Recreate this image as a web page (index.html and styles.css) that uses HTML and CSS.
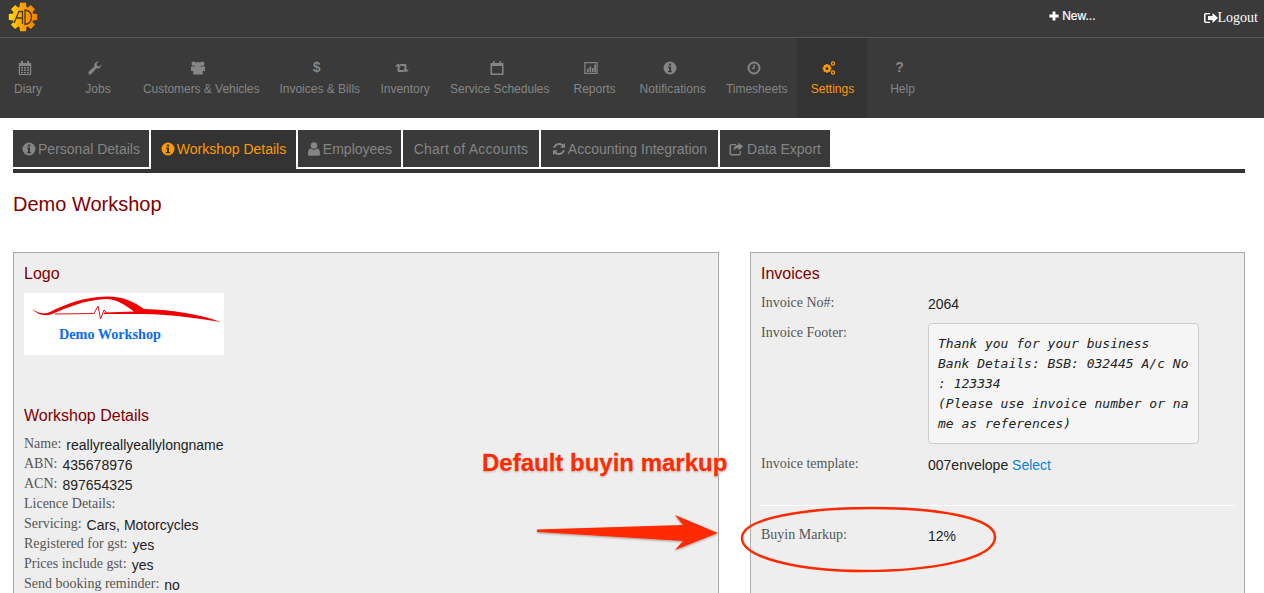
FILE: index.html
```html
<!DOCTYPE html>
<html lang="en">
<head>
<meta charset="utf-8">
<title>Workshop Details</title>
<link rel="stylesheet" href="styles.css">
</head>
<body>
<svg class="sprite" width="0" height="0" aria-hidden="true">
  <symbol id="i-cal" viewBox="0 0 14 14"><path fill-rule="evenodd" d="M3 0h2v2h4V0h2v2h2.200v12H.8V2H3zM2 5v8h10V5zM3 6h2v1.500H3zM6 6h2v1.500H6zM9 6h2v1.500H9zM3 8.500h2V10H3zM6 8.500h2V10H6zM9 8.500h2V10H9zM3 11h2v1.300H3zM6 11h2v1.300H6zM9 11h2v1.300H9z"/></symbol>
  <symbol id="i-wrench" viewBox="0 0 14 14"><path d="M13.500 3.200a4 4 0 0 1-5.200 4.100L3.400 13a1.700 1.700 0 0 1-2.500-2.400l5.500-5A4 4 0 0 1 10.800.5L8.600 2.800l.5 2.300 2.300.5z"/></symbol>
  <symbol id="i-users" viewBox="0 0 14 14"><circle cx="2.800" cy="2.800" r="2.300"/><circle cx="11.200" cy="2.800" r="2.300"/><circle cx="7" cy="4" r="3"/><path d="M0 5.500h14V10h-2.200v3.500H2.200V10H0z"/></symbol>
  <symbol id="i-retweet" viewBox="0 0 14 14"><path d="M0 5.500 3 2.500l3 3H4.600V9H8l1.800 2H3.800a1.200 1.200 0 0 1-1.200-1.200V5.500zM4.200 3h6a1.200 1.200 0 0 1 1.200 1.200V8.500H14L11 11.500 8 8.500h1.400V5H6z"/></symbol>
  <symbol id="i-calo" viewBox="0 0 14 14"><path fill-rule="evenodd" d="M3 0h1.500v2h5V0H11v2h2.500v12H.5V2H3zM2 5v7.500h10V5z"/></symbol>
  <symbol id="i-bar" viewBox="0 0 14 14"><path fill-rule="evenodd" d="M.3 1h13.400v12H.3zM1.500 2.200v9.600h11V2.200zM3 7.500h1.700v3.500H3zM5.500 5.500h1.700V11H5.500zM8 7h1.700v4H8zM10.300 3.500H12V11h-1.700z"/></symbol>
  <symbol id="i-info" viewBox="0 0 14 14"><path fill-rule="evenodd" d="M7 .5a6.500 6.500 0 1 1 0 13 6.500 6.500 0 0 1 0-13zM5.900 2.500v2h2.200v-2zM5 5.500v1.300h1V10H5v1.300h4V10H8V5.500z"/></symbol>
  <symbol id="i-clock" viewBox="0 0 14 14"><path fill-rule="evenodd" d="M7 .5a6.500 6.500 0 1 1 0 13 6.500 6.500 0 0 1 0-13zM7 2.500a4.500 4.500 0 1 0 0 9 4.500 4.500 0 0 0 0-9zM6.400 3.800h1.400V8H4.800V6.800h1.600z"/></symbol>
  <symbol id="i-cogs" viewBox="0 0 14 14"><path fill-rule="evenodd" d="M4 3h2l.3 1.200 1.100-.5 1.300 1.400-.6 1 1.200.4v2l-1.200.3.6 1.100-1.400 1.300-1-.6L6 11.800H4l-.3-1.200-1.100.6L1.300 9.800l.6-1L.6 8.400v-2l1.300-.3-.6-1.100 1.300-1.300 1.100.6zM5 5.900a1.500 1.500 0 1 0 0 3 1.500 1.500 0 0 0 0-3z"/><path fill-rule="evenodd" d="M11 .3a2.200 2.200 0 1 1 0 4.400 2.200 2.200 0 0 1 0-4.400zM11 1.600a.9.900 0 1 0 0 1.800.9.900 0 0 0 0-1.800zM11 9.300a2.200 2.200 0 1 1 0 4.400 2.200 2.200 0 0 1 0-4.400zM11 10.600a.9.900 0 1 0 0 1.800.9.900 0 0 0 0-1.800z"/></symbol>
  <symbol id="i-user" viewBox="0 0 14 14"><circle cx="7" cy="3.500" r="3.300"/><path d="M3.500 6.500 7 8l3.500-1.500c1.700.5 2.500 2.300 2.500 5.500 0 1-.6 1.800-1.700 1.800H2.700C1.600 13.800 1 13 1 12c0-3.200.8-5 2.500-5.500z"/></symbol>
  <symbol id="i-refresh" viewBox="0 0 14 14"><path d="M13 1v4.800H8.200L10 4a4.300 4.300 0 0 0-6.800 1.700H1.100A6.300 6.300 0 0 1 11.400 2.600zM1 13V8.200h4.800L4 10a4.300 4.300 0 0 0 6.800-1.700h2.100a6.300 6.300 0 0 1-10.300 3.100z"/></symbol>
  <symbol id="i-share" viewBox="0 0 14 14"><path d="M2.500 2H7v1.300H2.800a.8.800 0 0 0-.8.800v7.100c0 .4.400.8.800.8h7.100c.4 0 .8-.4.800-.8V9H12v2.500A2 2 0 0 1 10 13.500H2.500A2 2 0 0 1 .5 11.500V4a2 2 0 0 1 2-2z"/><path d="M9.500.5 14 4.500 9.500 8.500V6C7 6 5.500 6.800 4.500 9c0-4 2-6 5-6.200z"/></symbol>
  <symbol id="i-plus" viewBox="0 0 12 12"><path d="M4.300.5h3.400v3.800h3.800v3.400H7.700v3.800H4.300V7.700H.5V4.300h3.800z"/></symbol>
  <symbol id="i-out" viewBox="0 0 14 12"><path d="M1.800 1H6v1.300H2.300a.8.800 0 0 0-.8.800v5.800c0 .4.400.8.800.8H6V11H1.800A1.800 1.800 0 0 1 0 9.200V2.800A1.800 1.800 0 0 1 1.800 1z"/><path d="M8.500 1 14 6l-5.500 5V8H4V4h4.500z"/></symbol>
</svg>

<header class="topbar">
  <svg class="brand" viewBox="0 0 30 30" width="30" height="30" role="img" aria-label="Logo">
    <defs><linearGradient id="gearfill" gradientUnits="userSpaceOnUse" x1="1" x2="29" y1="15" y2="15"><stop offset="0" stop-color="#ffd800"/><stop offset="0.5" stop-color="#ff9f00"/><stop offset="1" stop-color="#f57f00"/></linearGradient></defs>
    <g fill="url(#gearfill)">
      <circle cx="15" cy="15" r="10.500"/>
      <path d="M12 .8h6l.6 5h-7.200zM12 29.200h6l.6-5h-7.200zM.8 12v6l5 .6v-7.200zM29.200 12v6l-5 .6v-7.200zM3 7.200 7.200 3l3.900 3.200-4.900 4.900zM27 7.200 22.800 3l-3.900 3.200 4.900 4.900zM3 22.800 7.200 27l3.900-3.200-4.900-4.900zM27 22.800 22.800 27l-3.900-3.200 4.900-4.900z"/>
    </g>
    <path fill="none" stroke="#4a3a10" stroke-width="1.300" d="M6 21 11 9.500h3.500V22M8 16h6"/>
    <path fill="none" stroke="#4a3a10" stroke-width="1.300" d="M17 8c4 .5 6.500 3.500 6.500 7.300S21 22 17 22.500z"/>
  </svg>
  <a class="new-link"><svg class="ic-plus"><use href="#i-plus"/></svg>New...</a>
  <a class="logout"><svg class="ic-out"><use href="#i-out"/></svg>Logout</a>
</header>

<nav class="mainnav">
  <a class="nav-item"><svg class="nav-ic"><use href="#i-cal"/></svg><span>Diary</span></a>
  <a class="nav-item"><svg class="nav-ic"><use href="#i-wrench"/></svg><span>Jobs</span></a>
  <a class="nav-item"><svg class="nav-ic"><use href="#i-users"/></svg><span class="nav-tight">Customers &amp; Vehicles</span></a>
  <a class="nav-item"><b class="nav-glyph">$</b><span>Invoices &amp; Bills</span></a>
  <a class="nav-item"><svg class="nav-ic"><use href="#i-retweet"/></svg><span>Inventory</span></a>
  <a class="nav-item"><svg class="nav-ic"><use href="#i-calo"/></svg><span>Service Schedules</span></a>
  <a class="nav-item"><svg class="nav-ic"><use href="#i-bar"/></svg><span>Reports</span></a>
  <a class="nav-item"><svg class="nav-ic"><use href="#i-info"/></svg><span class="nav-loose">Notifications</span></a>
  <a class="nav-item"><svg class="nav-ic"><use href="#i-clock"/></svg><span>Timesheets</span></a>
  <a class="nav-item is-active"><svg class="nav-ic"><use href="#i-cogs"/></svg><span>Settings</span></a>
  <a class="nav-item"><b class="nav-glyph">?</b><span>Help</span></a>
</nav>

<main class="content">
  <div class="tabs">
    <a class="tab"><svg class="tab-ic"><use href="#i-info"/></svg>Personal Details</a>
    <a class="tab is-active"><svg class="tab-ic"><use href="#i-info"/></svg>Workshop Details</a>
    <a class="tab"><svg class="tab-ic"><use href="#i-user"/></svg>Employees</a>
    <a class="tab tab-wide">Chart of Accounts</a>
    <a class="tab"><svg class="tab-ic"><use href="#i-refresh"/></svg>Accounting Integration</a>
    <a class="tab"><svg class="tab-ic tab-ic-gap"><use href="#i-share"/></svg>Data Export</a>
  </div>

  <h1 class="page-title">Demo Workshop</h1>

  <div class="columns">
    <section class="panel panel-left">
      <h2 class="panel-title">Logo</h2>
      <div class="logo-box">
        <svg class="logo-swoosh" viewBox="0 0 200 32" width="200" height="32" aria-hidden="true">
          <path fill="#f00000" d="M8 16C14 20 20 22 26 19 40 12 58 4 83 3.500 100 3.500 110 9 120 16 150 17 175 21 197 29 170 25 145 21 118 21L80 21V19.500L110 18.500C100 11 92 6 82 6 60 7 42 15 28 21 20 24 13 21 8 16z"/>
          <path fill="none" stroke="#e01010" stroke-width="1" d="M31 21 70 20.500 74 13 76.500 26 80 17 83 20"/>
        </svg>
        <span class="logo-name">Demo Workshop</span>
      </div>

      <h2 class="panel-title details-title">Workshop Details</h2>
      <dl class="facts">
        <div class="fact"><dt>Name:</dt><dd>reallyreallyeallylongname</dd></div>
        <div class="fact"><dt>ABN:</dt><dd>435678976</dd></div>
        <div class="fact"><dt>ACN:</dt><dd>897654325</dd></div>
        <div class="fact"><dt>Licence Details:</dt><dd></dd></div>
        <div class="fact"><dt>Servicing:</dt><dd>Cars, Motorcycles</dd></div>
        <div class="fact"><dt>Registered for gst:</dt><dd>yes</dd></div>
        <div class="fact"><dt>Prices include gst:</dt><dd>yes</dd></div>
        <div class="fact"><dt>Send booking reminder:</dt><dd>no</dd></div>
      </dl>
    </section>

    <section class="panel panel-right">
      <h2 class="panel-title">Invoices</h2>
      <div class="inv-row inv-no"><div class="inv-label">Invoice No#:</div><div class="inv-value">2064</div></div>
      <div class="inv-row inv-footer"><div class="inv-label">Invoice Footer:</div><pre class="footer-box">Thank you for your business
Bank Details: BSB: 032445 A/c No : 123334
(Please use invoice number or name as references)</pre></div>
      <div class="inv-row"><div class="inv-label">Invoice template:</div><div class="inv-value">007envelope <a class="link">Select</a></div></div>
      <hr class="divider">
      <div class="inv-row"><div class="inv-label">Buyin Markup:</div><div class="inv-value">12%</div></div>
    </section>
  </div>
</main>

<div class="annotation-text">Default buyin markup</div>
<svg class="annotation" width="1264" height="593" viewBox="0 0 1264 593" aria-hidden="true">
  <defs><filter id="shadow" x="-10%" y="-30%" width="120%" height="160%"><feDropShadow dx="0" dy="1" stdDeviation="1" flood-color="#000" flood-opacity=".35"/></filter></defs>
  <path fill="#ff2a00" filter="url(#shadow)" d="M537 529.500 683 525 675 515 718 533 675 550 683 541 537 532z"/>
  <path fill="none" stroke="#ff2a00" stroke-width="2.500" d="M872 508c-66 0-130 10-130 30 0 20 58 33 122 33s131-11 131-34c0-20-60-29-123-29z"/>
</svg>
</body>
</html>
```

FILE: styles.css
```css
* { box-sizing: border-box; }
html, body { margin: 0; height: 593px; overflow: hidden; background: #fff; }
body { position: relative; font-family: "Liberation Sans", Arial, sans-serif; font-size: 14px; color: #222; }
.sprite { display: block; height: 0; }

.topbar { height: 38px; background: #3a3a3a; border-bottom: 1px solid #575757; display: flex; align-items: flex-start; padding: 0 6px 0 8px; color: #fff; }
.brand { margin-top: 2px; }
.new-link { margin-left: auto; margin-top: 8px; font-size: 12px; line-height: 16px; display: flex; align-items: center; -webkit-text-stroke: .2px #fff; }
.ic-plus { width: 10px; height: 10px; fill: #fff; margin-right: 3px; }
.logout { margin-left: 108px; margin-top: 9px; font-family: "Liberation Serif", serif; font-size: 14px; line-height: 18px; display: flex; align-items: center; }
.ic-out { width: 14px; height: 12px; fill: #fff; }

.mainnav { height: 80px; background: #3a3a3a; display: flex; color: #858585; font-size: 12px; overflow: hidden; }
.nav-item { min-width: 70px; padding: 22px 10px 0; display: flex; flex-direction: column; align-items: center; white-space: nowrap; }
.nav-item:first-child { min-width: 63px; padding-left: 3px; padding-right: 10px; }
.nav-item span { margin-top: 6px; line-height: 16px; }
.nav-item .nav-tight { letter-spacing: -.05px; }
.nav-item .nav-loose { letter-spacing: .08px; }
.nav-ic { width: 14px; height: 14px; fill: #858585; display: block; margin: 1px 6px 0 0; }
.nav-glyph { height: 15px; line-height: 15px; font-size: 14px; margin-right: 6px; }
.nav-item.is-active { background: #333; color: #ff9900; }
.nav-item.is-active .nav-ic { fill: #ff9900; }

.content { padding: 12px 19px 0 13px; }
.tabs { display: grid; grid-template-columns: 136px 145px 103px 136px 177px 110px; gap: 2px; height: 43px; border-bottom: 4px solid #333; }
.tab { height: 37px; background: #3a3a3a; color: #858585; display: flex; align-items: center; justify-content: center; white-space: nowrap; }
.tab-wide { letter-spacing: .24px; }
.tab.is-active { height: 39px; padding-bottom: 2px; background: #333; color: #ff9900; }
.tab-ic { width: 14px; height: 14px; fill: #858585; margin-right: 2px; }
.tab-ic-gap { margin-right: 4px; }
.tab.is-active .tab-ic { fill: #ff9900; }

.page-title { margin: 19px 0 0; font-size: 20px; font-weight: 400; line-height: 24px; color: #800000; }

.columns { display: flex; gap: 31px; margin-top: 36px; align-items: flex-start; }
.panel { background: #eee; border: 1px solid #aaa; padding: 11px 10px 10px; height: 420px; }
.panel-left { width: 706px; }
.panel-right { width: 495px; }
.panel-title { margin: 0; font-size: 16px; font-weight: 400; line-height: 20px; color: #800000; }

.logo-box { width: 200px; height: 62px; background: #fff; margin-top: 9px; display: flex; flex-direction: column; align-items: center; }
.logo-swoosh { display: block; flex: none; }
.logo-name { padding-right: 28px; font-family: "Liberation Serif", serif; font-weight: 700; font-size: 14.200px; line-height: 18px; color: #0a6cf0; white-space: nowrap; }
.details-title { margin-top: 51px; }

.facts { margin: 8px 0 0; }
.fact { display: flex; gap: 5px; height: 20px; }
dt { font-family: "Liberation Serif", serif; color: #555; padding-top: 1px; line-height: 18px; }
dd { margin: 0; padding-top: 2px; line-height: 18px; color: #222; }

.inv-row { display: flex; }
.inv-no { height: 30px; }
.inv-label { width: 167px; flex: none; font-family: "Liberation Serif", serif; color: #555; line-height: 18px; }
.inv-value { padding-top: 1px; line-height: 18px; color: #222; }
.panel-right .panel-title { margin-bottom: 10px; }
.inv-footer { margin-bottom: 11px; }
.footer-box { margin: -1px 0 0; width: 271px; padding: 10px 9px 9px; background: #f5f5f5; border: 1px solid #ccc; border-radius: 4px; font-family: "DejaVu Sans Mono", monospace; font-style: italic; font-size: 13px; line-height: 20px; color: #222; white-space: pre-wrap; word-break: break-all; }
.link { color: #0a84d6; }
.divider { border: 0; border-top: 1px solid #fff; margin: 31px -1px 20px 0; }

.annotation { position: absolute; left: 0; top: 0; pointer-events: none; }
.annotation-text { position: absolute; left: 482px; top: 449px; z-index: 2; font-size: 24px; line-height: 28px; font-weight: 700; color: #ff2a00; white-space: nowrap; -webkit-text-stroke: .3px #ff2a00; text-shadow: 0 0 2px #fff, 0 0 2px #fff, 0 0 2px #fff, 0 1px 2px rgba(0,0,0,.4); }
```
